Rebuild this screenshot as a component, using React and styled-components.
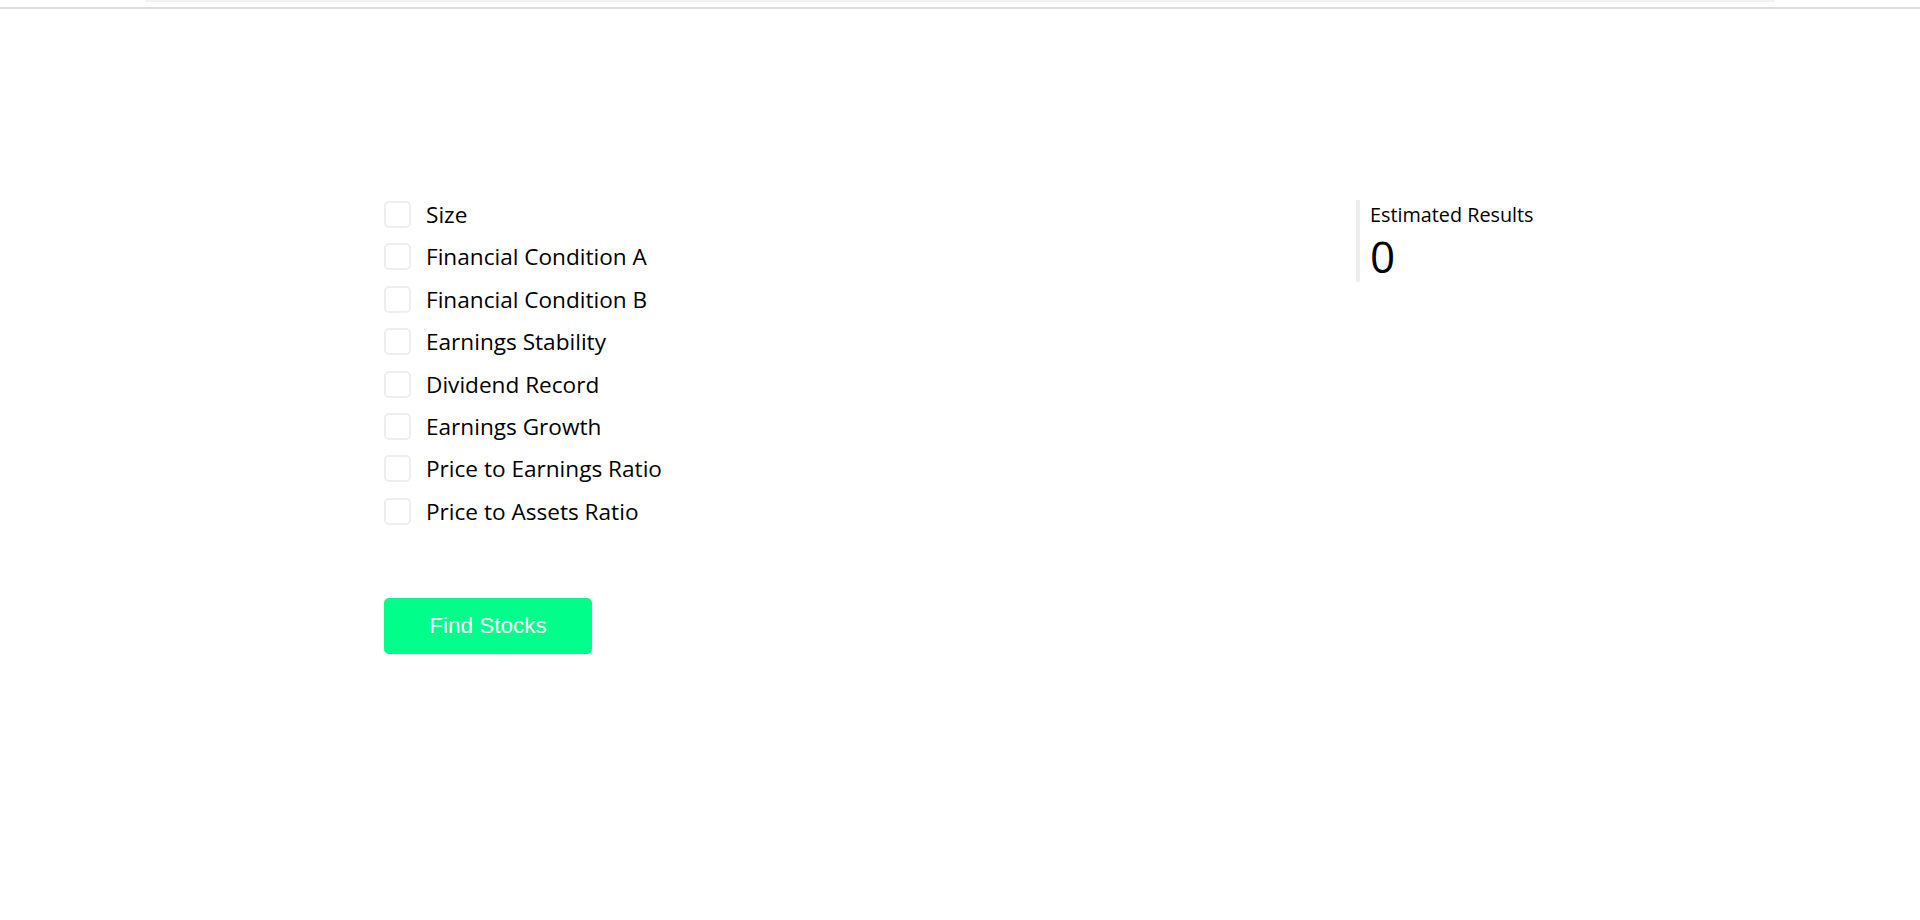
import React, { useState } from 'react';
import styled, { createGlobalStyle } from 'styled-components';

const criteria = [
  'Size',
  'Financial Condition A',
  'Financial Condition B',
  'Earnings Stability',
  'Dividend Record',
  'Earnings Growth',
  'Price to Earnings Ratio',
  'Price to Assets Ratio',
];

const App = () => {
  const [checked, setChecked] = useState({});

  const toggle = (name) =>
    setChecked((prev) => ({ ...prev, [name]: !prev[name] }));

  return (
    <>
      <GlobalStyle />
      <TopBar>
        <SearchStrip />
        <Divider />
      </TopBar>
      <Main>
        <Filters>
          <CriteriaList>
            {criteria.map((name) => (
              <Row key={name} onClick={() => toggle(name)}>
                <Box $checked={!!checked[name]} />
                <Label>{name}</Label>
              </Row>
            ))}
          </CriteriaList>
          <FindButton type="button">Find Stocks</FindButton>
        </Filters>
        <Results>
          <ResultsLabel>Estimated Results</ResultsLabel>
          <ResultsCount>0</ResultsCount>
        </Results>
      </Main>
    </>
  );
};

export default App;

const GlobalStyle = createGlobalStyle`
  html, body {
    margin: 0;
    padding: 0;
    background: #fff;
  }

  body {
    font-family: 'Open Sans', 'Noto Sans', sans-serif;
    color: #000;
  }
`;

const TopBar = styled.header`
  width: 100%;
`;

const SearchStrip = styled.div`
  height: 2px;
  margin: 0 145px;
  background: #f1f1f1;
  border-radius: 0 0 4px 4px;
`;

const Divider = styled.div`
  height: 2px;
  margin-top: 5px;
  background: #dddbe1;
`;

const Main = styled.main`
  width: 1152px;
  margin: 0 auto;
  padding-top: 192px;
  display: flex;
  justify-content: space-between;
  align-items: flex-start;
`;

const Filters = styled.section`
  display: flex;
  flex-direction: column;
  align-items: flex-start;
`;

const CriteriaList = styled.div`
  display: flex;
  flex-direction: column;
  gap: 15.4px;
`;

const Row = styled.label`
  display: flex;
  align-items: center;
  height: 27px;
  cursor: pointer;
`;

const Box = styled.span`
  box-sizing: border-box;
  width: 27px;
  height: 27px;
  border: 2px solid #eeeeee;
  border-radius: 5px;
  background: ${({ $checked }) => ($checked ? '#00ff8a' : '#fff')};
  margin-right: 15px;
`;

const Label = styled.span`
  font-size: 22.6px;
  color: #000;
`;

const FindButton = styled.button`
  margin-top: 73px;
  width: 208px;
  height: 56px;
  border: none;
  border-radius: 5px;
  background: #00ff8a;
  color: #fff;
  font-family: 'Liberation Sans', Arial, sans-serif;
  font-size: 22.5px;
  cursor: pointer;
`;

const Results = styled.aside`
  width: 166px;
  margin-top: -1px;
  border-left: 4px solid #eeeeee;
  padding-left: 10px;
  display: flex;
  flex-direction: column;
`;

const ResultsLabel = styled.span`
  font-size: 19.8px;
  line-height: 30px;
`;

const ResultsCount = styled.span`
  font-size: 44px;
  line-height: 52px;
`;
